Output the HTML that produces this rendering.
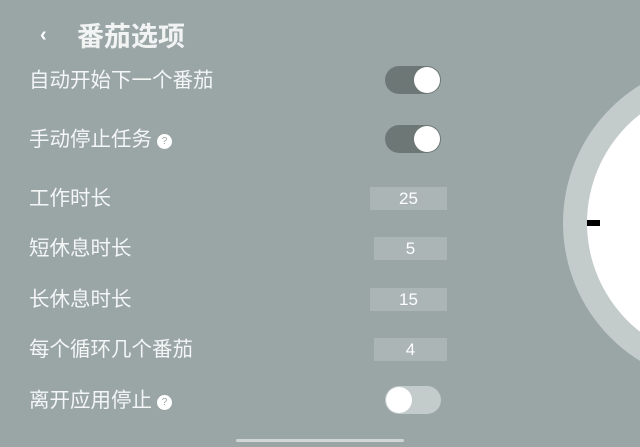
<!DOCTYPE html>
<html><head><meta charset="utf-8"><style>
html,body{margin:0;padding:0;width:640px;height:447px;overflow:hidden;background:#9aa5a6;position:relative;font-family:"Liberation Sans","Noto Sans CJK SC",sans-serif;color:#fff}
.a{position:absolute}
.lbl{position:absolute;left:29px;font-size:20.5px;line-height:24px;white-space:nowrap;color:#f4f6f6}
.q{display:inline-block;width:15px;height:15px;border-radius:50%;background:#fff;color:#9aa5a6;font-size:10px;line-height:15px;text-align:center;vertical-align:2px;margin-left:5px}
.tg{position:absolute;left:385px;width:56px;height:28px;border-radius:14px;background:#6d7876}
.tg i{position:absolute;top:1px;width:26px;height:26px;border-radius:50%;background:#fff}
.box{position:absolute;height:23px;background:#abb5b6;font-size:17px;line-height:23px;text-align:center;color:#fff}
</style></head><body>
<div class="a" style="left:40px;top:24px;font-size:20px;font-weight:bold">‹</div>
<div class="a" style="left:77px;top:21px;font-size:27px;line-height:32px;font-weight:bold;color:#f2f4f4">番茄选项</div>
<div class="lbl" style="top:69px">自动开始下一个番茄</div>
<div class="tg" style="top:66px"><i style="right:1px"></i></div>
<div class="lbl" style="top:128px">手动停止任务<span class="q">?</span></div>
<div class="tg" style="top:125px"><i style="right:1px"></i></div>
<div class="lbl" style="top:187px">工作时长</div>
<div class="box" style="left:370px;width:77px;top:187px">25</div>
<div class="lbl" style="top:237px">短休息时长</div>
<div class="box" style="left:374px;width:73px;top:237px">5</div>
<div class="lbl" style="top:288px">长休息时长</div>
<div class="box" style="left:370px;width:77px;top:288px">15</div>
<div class="lbl" style="top:338px">每个循环几个番茄</div>
<div class="box" style="left:374px;width:73px;top:338px">4</div>
<div class="lbl" style="top:389px">离开应用停止<span class="q">?</span></div>
<div class="tg" style="top:386px;background:#c3cccb"><i style="left:1px"></i></div>
<div class="a" style="left:563px;top:61px;width:324px;height:324px;border-radius:50%;background:#c4cccb"></div>
<div class="a" style="left:587px;top:85px;width:276px;height:276px;border-radius:50%;background:#fff"></div>
<div class="a" style="left:587px;top:220px;width:13px;height:6px;background:#000"></div>
<div class="a" style="left:236px;top:439px;width:168px;height:3px;border-radius:2px;background:#d0d6d6"></div>
</body></html>
